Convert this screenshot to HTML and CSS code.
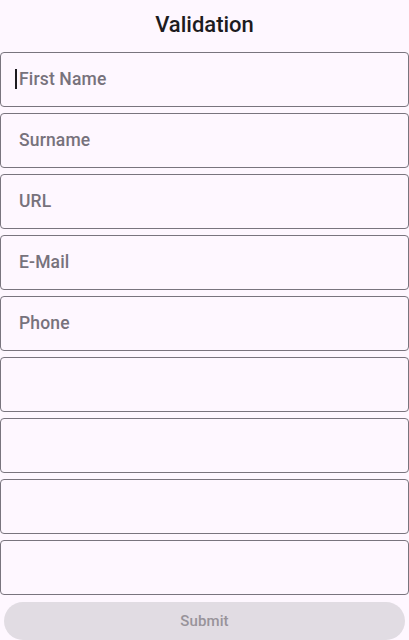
FILE: index.html
```html
<!DOCTYPE html>
<html lang="en">
<head>
<meta charset="utf-8">
<title>Validation</title>
<link rel="stylesheet" href="styles.css">
</head>
<body>
<div class="page">
  <header class="appbar"><h1 class="title">Validation</h1></header>
  <form class="form">
    <div class="field"><span class="caret"></span><span class="hint">First Name</span></div>
    <div class="field"><span class="hint">Surname</span></div>
    <div class="field"><span class="hint">URL</span></div>
    <div class="field"><span class="hint">E-Mail</span></div>
    <div class="field"><span class="hint">Phone</span></div>
    <div class="field"></div>
    <div class="field"></div>
    <div class="field"></div>
    <div class="field"></div>
    <div class="actions"><button type="button" class="submit" disabled>Submit</button></div>
  </form>
</div>
</body>
</html>
```

FILE: styles.css
```css
html, body {
  margin: 0;
  padding: 0;
  background: #FEF7FF;
}
body {
  font-family: Roboto, "Noto Sans", "Liberation Sans", sans-serif;
  color: #1D1B20;
  width: 409px;
  height: 640px;
  overflow: hidden;
}
.page {
  display: flex;
  flex-direction: column;
}
.appbar {
  height: 52px;
  box-sizing: border-box;
  padding-top: 11px;
  display: flex;
  justify-content: center;
}
.title {
  margin: 0;
  font-size: 22px;
  line-height: 28px;
  font-weight: 500;
  color: #1D1B20;
}
.form {
  display: flex;
  flex-direction: column;
  gap: 6px;
  margin: 0;
}
.field {
  position: relative;
  height: 55px;
  box-sizing: border-box;
  border: 1px solid #79747E;
  border-radius: 4px;
  padding: 0 0 2px 18px;
  display: flex;
  align-items: center;
}
.hint {
  font-size: 17.5px;
  line-height: 24px;
  font-weight: 500;
  color: #77727C;
  letter-spacing: 0.15px;
}
.caret {
  position: absolute;
  left: 14px;
  top: 16px;
  width: 2px;
  height: 20px;
  background: #1D1B20;
}
.actions {
  padding: 1px 4px 0 4px;
}
.submit {
  width: 100%;
  height: 38px;
  border: none;
  border-radius: 19px;
  background: #E1DCE3;
  color: #98939A;
  font-family: Roboto, "Noto Sans", "Liberation Sans", sans-serif;
  font-size: 15px;
  font-weight: 500;
  letter-spacing: 0.1px;
  padding: 0;
}
```
